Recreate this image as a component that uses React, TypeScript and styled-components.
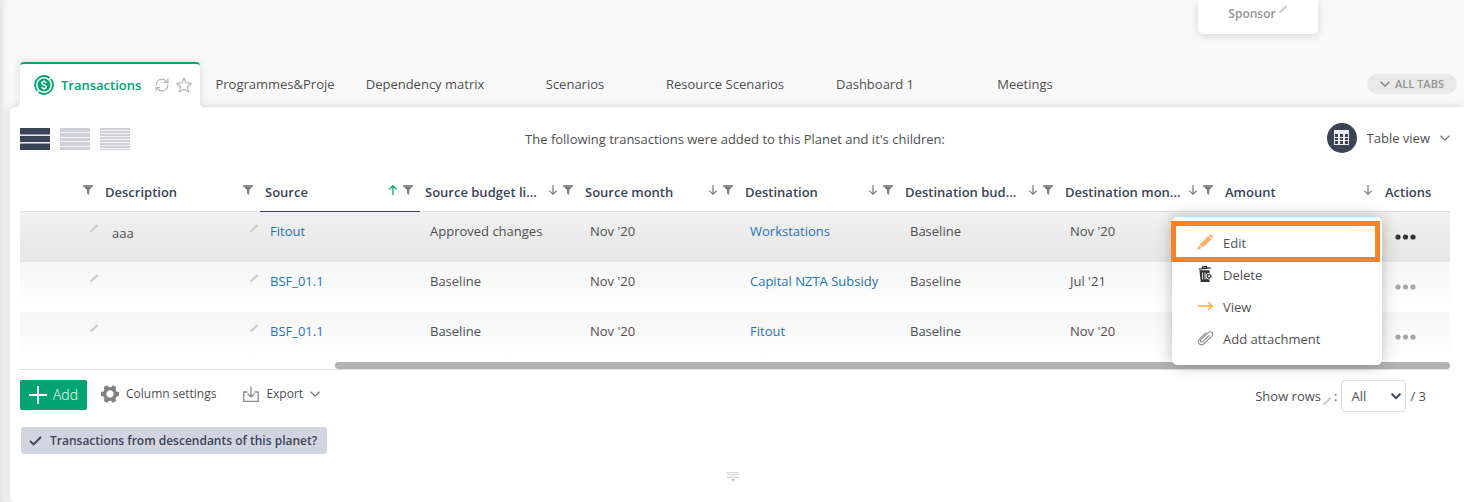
import React from "react";
import styled, { createGlobalStyle, css } from "styled-components";

const GlobalStyle = createGlobalStyle`
  *, *::before, *::after { box-sizing: border-box; }
  body {
    margin: 0;
    background: #f9f9f9;
    color: #4f4f4f;
    font-family: "Open Sans", "Noto Sans", sans-serif;
    font-size: 13px;
    line-height: 18px;
  }
  button, select, input { font: inherit; color: inherit; margin: 0; }
  button { border: 0; padding: 0; background: none; cursor: pointer; }
  a { color: #1f74b8; text-decoration: none; }
  svg { display: block; flex: none; }
`;

const Page = styled.div`
  display: flex;
  flex-direction: column;
  min-height: 100vh;
  overflow: hidden;
  box-shadow: inset 8px 0 8px -6px rgba(0, 0, 0, 0.12);
`;

const TopArea = styled.div`
  display: flex;
  justify-content: flex-end;
  align-items: flex-start;
  height: 62px;
  padding-right: 146px;
`;

const SponsorCard = styled.div`
  display: flex;
  justify-content: center;
  gap: 3px;
  width: 120px;
  height: 34px;
  padding-top: 5px;
  border-radius: 0 0 5px 5px;
  background: #fff;
  box-shadow: 0 2px 8px rgba(0, 0, 0, 0.14);
  color: #939393;
  font-size: 12px;
  font-weight: 600;
`;

const TabBar = styled.nav`
  position: relative;
  z-index: 1;
  display: flex;
  height: 45px;
  padding: 0 7px 0 20px;
`;

const ActiveTab = styled.div`
  position: relative;
  display: flex;
  align-items: center;
  width: 180px;
  padding: 0 8px 2px 14px;
  border-top: 2px solid #00a470;
  border-radius: 4px 4px 0 0;
  background: #fff;
  box-shadow: 0 0 10px rgba(0, 0, 0, 0.12);
  clip-path: inset(-10px -10px 0 -10px);

  &::before,
  &::after {
    content: "";
    position: absolute;
    bottom: 0;
    width: 4px;
    height: 4px;
  }
  &::before {
    right: 100%;
    background: radial-gradient(circle at 0 0, transparent 4px, #fff 4px);
  }
  &::after {
    left: 100%;
    background: radial-gradient(circle at 100% 0, transparent 4px, #fff 4px);
  }
`;

const ActiveTabName = styled.button`
  display: flex;
  align-items: center;
  flex: 1;
  gap: 7px;
  color: #00a470;
  font-weight: 600;
`;

const IconButton = styled.button`
  margin-left: 7px;
  color: #b5b5b5;
`;

const Tab = styled.button`
  width: 150px;
  padding: 0 14px 2px;
  white-space: nowrap;
`;

const AllTabs = styled.button`
  display: flex;
  align-items: center;
  justify-content: center;
  gap: 5px;
  width: 90px;
  height: 20px;
  margin: 12px 0 0 auto;
  border-radius: 10px;
  background: #e9e9e9;
  color: #939393;
  font-size: 11px;
  font-weight: 600;
`;

const Panel = styled.main`
  flex: 1;
  margin-left: 10px;
  padding: 0 14px 20px 10px;
  border-radius: 5px 0 0 5px;
  background: #fff;
  box-shadow: 0 0 10px rgba(0, 0, 0, 0.15);
`;

const Toolbar = styled.div`
  display: grid;
  grid-template-columns: 1fr auto 1fr;
  align-items: center;
  height: 64px;
`;

const DensityGroup = styled.div`
  display: flex;
  gap: 10px;
`;

const DensityButton = styled.button<{ $active?: boolean }>`
  color: ${(p) => (p.$active ? "#3b4457" : "#cfd1d7")};
`;

const ViewPicker = styled.button`
  display: flex;
  align-items: center;
  justify-self: end;
  gap: 10px;
  padding-bottom: 3px;
`;

const ViewBadge = styled.span`
  display: grid;
  place-items: center;
  width: 30px;
  height: 30px;
  border-radius: 50%;
  background: #3b4457;
`;

const TableFrame = styled.div`
  border-bottom: 1px solid #ddd;
`;

const Table = styled.table`
  width: 100%;
  table-layout: fixed;
  border-collapse: separate;
  border-spacing: 0;
`;

const Col = styled.col<{ $width?: number }>`
  width: ${(p) => (p.$width ? `${p.$width}px` : "auto")};
`;

const HeadCell = styled.th<{ $sorted?: boolean }>`
  height: 41px;
  padding: 2px 7px 0 5px;
  border-bottom: 1px solid ${(p) => (p.$sorted ? "#3b4457" : "#ddd")};
  color: #3b4457;
  font-weight: 600;
  text-align: left;
`;

const HeadContent = styled.div`
  display: flex;
  align-items: center;
  gap: 5px;
`;

const HeadLabel = styled.span`
  flex: 1;
  min-width: 0;
  white-space: nowrap;
`;

const HeadButton = styled.button<{ $on?: boolean }>`
  height: 14px;
  color: ${(p) => (p.$on ? "#00a470" : "#808080")};

  svg {
    margin-bottom: 4px;
  }
`;

const Row = styled.tr<{ $active?: boolean }>`
  background: ${(p) =>
    p.$active
      ? "linear-gradient(#f1f1f1, #e5e5e5)"
      : "linear-gradient(#f6f6f6, #fff)"};
`;

const Cell = styled.td`
  height: 50px;
  padding: 10px 0 0 10px;
  vertical-align: top;
  white-space: nowrap;
`;

const EditableCell = styled(Cell)`
  padding: 12px 1px 0 12px;
`;

const Editable = styled.div`
  display: flex;
  justify-content: space-between;
`;

const PencilButton = styled.button`
  height: 8px;
  margin-left: auto;
`;

const ActionCell = styled(Cell)`
  position: relative;
  padding: 0 0 1px 15px;
  vertical-align: middle;
`;

const DotsButton = styled.button<{ $active?: boolean }>`
  display: block;
  color: ${(p) => (p.$active ? "#333" : "#a6a6a6")};
`;

const Menu = styled.div`
  position: absolute;
  z-index: 2;
  top: 5px;
  right: 68px;
  width: 210px;
  padding: 10px 0;
  border-radius: 5px;
  background: #fff;
  box-shadow: 0 0 16px rgba(0, 0, 0, 0.25);
`;

const MenuItem = styled.button<{ $marked?: boolean }>`
  position: relative;
  display: flex;
  align-items: center;
  gap: 9px;
  width: 100%;
  height: 32px;
  padding-left: 25px;

  svg {
    margin-bottom: 2px;
  }

  ${(p) =>
    p.$marked &&
    css`
      &::after {
        content: "";
        position: absolute;
        inset: -6px 2px -3px -1px;
        border: 5px solid #ff8126;
      }
    `}
`;

const ScrollTrack = styled.div`
  height: 7px;
`;

const ScrollThumb = styled.div`
  width: 78%;
  height: 7px;
  margin-left: auto;
  border-radius: 4px;
  background: #b3b3b3;
`;

const Footer = styled.div`
  display: flex;
  align-items: flex-start;
  padding: 10px 24px 0 0;
`;

const AddButton = styled.button`
  display: flex;
  align-items: center;
  justify-content: center;
  gap: 6px;
  width: 67px;
  height: 30px;
  border-radius: 2px;
  background: #00a470;
  color: #fff;
  font-size: 14px;
  font-weight: 300;
`;

const FooterButton = styled.button<{ $gap: number }>`
  display: flex;
  align-items: center;
  gap: 7px;
  height: 28px;
  margin-left: ${(p) => p.$gap}px;
  font-size: 12px;
`;

const RowsPicker = styled.div`
  display: flex;
  align-items: center;
  gap: 4px;
  margin-left: auto;
`;

const RowsLabel = styled.label`
  display: flex;
  align-items: center;
  gap: 2px;
`;

const LowPencil = styled.span`
  padding-top: 10px;
`;

const SelectBox = styled.div`
  position: relative;

  svg {
    position: absolute;
    top: 13px;
    right: 5px;
    pointer-events: none;
  }
`;

const RowsSelect = styled.select`
  appearance: none;
  display: block;
  width: 65px;
  height: 32px;
  padding: 0 20px 0 9px;
  border: 1px solid #ddd;
  border-radius: 4px;
  background: #fff;
`;

const FilterChip = styled.label`
  display: inline-flex;
  align-items: center;
  gap: 8px;
  height: 27px;
  margin: 15px 0 0 1px;
  padding: 0 10px 0 8px;
  border-radius: 3px;
  background: #d1d5e0;
  color: #3b4457;
  font-size: 12px;
  font-weight: 600;
  cursor: pointer;
`;

const ChipCheck = styled.span`
  display: grid;

  & > * {
    grid-area: 1 / 1;
  }
  input {
    appearance: none;
    width: 13px;
    height: 10px;
  }
  svg {
    pointer-events: none;
  }
`;

const ResizeHandle = styled.div`
  display: flex;
  justify-content: center;
  padding: 18px 4px 0 0;
`;

const Pencil = () => (
  <svg width="9" height="8" viewBox="0 0 9 8" fill="none">
    <path d="M2 6.2 7 1.6" stroke="#cbcbcb" strokeWidth="2.2" strokeLinecap="round" />
    <path d="M.2 7.8.8 5.8 2.3 7.2z" fill="#bbb" />
  </svg>
);

const Chevron = ({ size = 10, color = "#777", weight = 1.3 }) => (
  <svg width={size} height={6} viewBox="0 0 10 6" fill="none" stroke={color} strokeWidth={weight}>
    <path d="M.6.7 5 5.1 9.4.7" />
  </svg>
);

const Coin = () => (
  <svg width="20" height="20" viewBox="-10 -10 20 20" fill="none">
    <circle r="6.5" fill="#00a470" />
    <circle
      r="9"
      stroke="#00a470"
      strokeWidth="1.8"
      strokeDasharray="26.5 1.77"
      transform="rotate(-42)"
    />
    <path
      d="M2.3-1.9c-.2-.9-1-1.4-2.2-1.4-1.3 0-2.3.6-2.3 1.6C-2.2.7 2.4-.6 2.4 1.8c0 1-1 1.6-2.4 1.6-1.2 0-2.2-.6-2.4-1.5M0-4.8v1.5M0 3.3v1.5"
      stroke="#fff"
      strokeWidth="1.5"
    />
  </svg>
);

const Refresh = () => (
  <svg width="14" height="14" viewBox="0 0 14 14" fill="none" stroke="currentColor" strokeWidth="1.2">
    <path d="M1.2 7.6A5.8 5.8 0 0 1 11.8 3.8M12.8 6.4A5.8 5.8 0 0 1 2.2 10.2" />
    <path d="M13 .4v4H9M1 13.6v-4h4" />
  </svg>
);

const Star = () => (
  <svg width="16" height="16" viewBox="0 0 16 16" fill="none" stroke="currentColor" strokeWidth="1.2">
    <path d="m8 1.1 2 4.7 5.2.5-3.9 3.4 1.2 5L8 12.1l-4.5 2.6 1.2-5L.8 6.3 6 5.8z" />
  </svg>
);

const DensityIcon = ({ lines }: { lines: number[] }) => (
  <svg width="30" height="22" viewBox="0 0 30 22">
    <rect width="30" height="22" fill="currentColor" />
    {lines.map((y) => (
      <rect key={y} y={y} width="30" height="1" fill="#f4f4f6" />
    ))}
  </svg>
);

const ComfortableIcon = () => (
  <svg width="30" height="22" viewBox="0 0 30 22">
    <path d="M0 0h30v22H0z" fill="currentColor" />
    <path d="M0 6h30v1H0zM0 15h30v1H0z" fill="#9a9fa9" />
    <path d="M0 7h30v1H0zM0 14h30v1H0z" fill="#e6e7ea" />
  </svg>
);

const GridIcon = () => (
  <svg width="15" height="15" viewBox="0 0 15 15" fill="#fff">
    <path d="M0 0h15v15H0z" opacity=".9" />
    <path
      fill="#3b4457"
      d="M1 4h3v3H1zM6 4h3v3H6zM11 4h3v3h-3zM1 8h3v2H1zM6 8h3v2H6zM11 8h3v2h-3zM1 11h3v3H1zM6 11h3v3H6zM11 11h3v3h-3z"
    />
  </svg>
);

const Funnel = () => (
  <svg width="10" height="10" viewBox="0 0 10 10" fill="#7d7d7d">
    <path d="M0 0h10v2H0z" opacity=".85" />
    <path d="M1 2h8L6.2 5.2V10L4 8.2v-3z" />
  </svg>
);

const SortArrow = ({ up }: { up?: boolean }) => (
  <svg width="10" height="10" viewBox="0 0 10 10" fill="none" stroke="currentColor" strokeWidth="1.3">
    <path d={up ? "M5 10V.8M1.2 4.4 5 .8l3.8 3.6" : "M5 0v9.2M1.2 5.6 5 9.2l3.8-3.6"} />
  </svg>
);

const Dots = () => (
  <svg width="21" height="6" viewBox="0 0 21 6" fill="currentColor">
    <circle cx="3" cy="3" r="2.6" />
    <circle cx="10.5" cy="3" r="2.6" />
    <circle cx="18" cy="3" r="2.6" />
  </svg>
);

const EditIcon = () => (
  <svg width="17" height="16" viewBox="0 0 17 16" fill="#f9ac62">
    <path d="m11.4 2.1 3.1 3.1-8.8 8.4-3.1-3.1z" />
    <path d="m12.1 1.4.7-.8q.6-.5 1.2 0l2 2q.5.6 0 1.2l-.8.8zM2 11.2l2.9 2.8-4.5 1.7z" />
    <path d="m4 11.6 8.8-8.4" stroke="#fbcd9e" strokeWidth=".6" />
  </svg>
);

const TrashIcon = () => (
  <svg width="17" height="16" viewBox="0 0 17 16" fill="none">
    <path d="M1.8 3.2 13.8 1.8M5.6 2.5V1l4-.5v1.5" stroke="#333" strokeWidth="1.3" />
    <path d="M2.4 4.3h10.2V16H3.8z" fill="#333" />
    <path d="M5.6 6.5v7M8 6.5v7" stroke="#e4e4e4" strokeWidth="1" />
    <circle cx="12" cy="10.2" r="3.2" fill="#fff" />
    <circle cx="12" cy="10.2" r="1.9" stroke="#333" strokeWidth="1.3" strokeDasharray="1.4 .6" />
    <circle cx="12" cy="10.2" r="1.6" stroke="#333" strokeWidth="1" />
  </svg>
);

const ArrowIcon = () => (
  <svg width="17" height="10" viewBox="0 0 17 10" fill="none" stroke="#f6b02c" strokeWidth="1.5">
    <path d="M1 5h14M11.4 1.2 15.2 5l-3.8 3.8" />
  </svg>
);

const ClipIcon = () => (
  <svg width="17" height="16" viewBox="0 0 17 16" fill="none" stroke="#8f8f8f" strokeWidth="1.1">
    <path d="m12.2 5.4-6.4 6.1c-1.6 1.4-3.3-.3-1.9-1.8l7.3-7c2.8-2.4 6 .7 3.6 3.4l-7.6 7.4c-3.8 3.3-8.1-.8-4.6-4.6l6.6-6.2" />
  </svg>
);

const PlusIcon = () => (
  <svg width="18" height="18" viewBox="0 0 18 18" stroke="#fff" strokeWidth="2">
    <path d="M9 0v18M0 9h18" />
  </svg>
);

const Gear = () => (
  <svg width="18" height="18" viewBox="-9 -9 18 18">
    <circle r="5.4" fill="none" stroke="#808080" strokeWidth="3.4" />
    {[30, 90, 150, 210, 270, 330].map((a) => (
      <rect key={a} x="-2.3" y="-9" width="4.6" height="3.4" rx="1" fill="#808080" transform={`rotate(${a})`} />
    ))}
  </svg>
);

const ExportIcon = () => (
  <svg width="16" height="16" viewBox="0 0 16 16" fill="none" stroke="#8c8c8c" strokeWidth="1.3">
    <path d="M4.5 6H.7v9.3h14.6V6h-3.8M8 .5v10.3M4.6 7.8 8 11l3.4-3.2" />
  </svg>
);

const Check = () => (
  <svg width="13" height="10" viewBox="0 0 13 10" fill="none" stroke="#3b4457" strokeWidth="1.9">
    <path d="M1 4.8 4.6 8.4 12 1" />
  </svg>
);

const HandleIcon = () => (
  <svg width="12" height="9" viewBox="0 0 12 9" fill="#d4d4d4">
    <path d="M0 0h12v1H0zM0 2h12v1H0zM0 5h12v1H0z" />
    <path d="M0 4h12v1H0z" opacity=".4" />
    <path d="M4 7h4v1H7v1H5V8H4z" fill="#c4c4c4" />
  </svg>
);

const tabs = [
  "Programmes&Proje",
  "Dependency matrix",
  "Scenarios",
  "Resource Scenarios",
  "Dashboard 1",
  "Meetings",
];

const densities = [
  { name: "Comfortable rows", icon: <ComfortableIcon /> },
  { name: "Medium rows", icon: <DensityIcon lines={[4, 9, 13, 18]} /> },
  { name: "Compact rows", icon: <DensityIcon lines={[2, 5, 8, 11, 14, 17, 20]} /> },
];

const columns = [
  { label: "", filter: true },
  { label: "Description", filter: true },
  { label: "Source", sort: "up", filter: true },
  { label: "Source budget li...", sort: "down", filter: true },
  { label: "Source month", sort: "down", filter: true },
  { label: "Destination", sort: "down", filter: true },
  { label: "Destination bud...", sort: "down", filter: true },
  { label: "Destination mon...", sort: "down", filter: true },
  { label: "Amount", sort: "down" },
  { label: "Actions" },
];

const rows = [
  ["aaa", "Fitout", "Approved changes", "Nov '20", "Workstations", "Baseline", "Nov '20"],
  ["", "BSF_01.1", "Baseline", "Nov '20", "Capital NZTA Subsidy", "Baseline", "Jul '21"],
  ["", "BSF_01.1", "Baseline", "Nov '20", "Fitout", "Baseline", "Nov '20"],
];

const menuItems = [
  { label: "Edit", icon: <EditIcon />, marked: true },
  { label: "Delete", icon: <TrashIcon /> },
  { label: "View", icon: <ArrowIcon /> },
  { label: "Add attachment", icon: <ClipIcon /> },
];

const ActionsMenu = () => (
  <Menu role="menu">
    {menuItems.map((item) => (
      <MenuItem key={item.label} role="menuitem" $marked={item.marked}>
        {item.icon}
        {item.label}
      </MenuItem>
    ))}
  </Menu>
);

const TransactionsTable = () => (
  <TableFrame>
    <Table>
      <colgroup>
        {columns.map((c, i) => (
          <Col key={i} $width={i === 0 ? undefined : i === 9 ? 70 : 160} />
        ))}
      </colgroup>
      <thead>
        <tr>
          {columns.map((c, i) => (
            <HeadCell key={i} $sorted={c.sort === "up"}>
              <HeadContent>
                <HeadLabel>{c.label}</HeadLabel>
                {c.sort && (
                  <HeadButton $on={c.sort === "up"} aria-label={`Sort by ${c.label}`}>
                    <SortArrow up={c.sort === "up"} />
                  </HeadButton>
                )}
                {c.filter && (
                  <HeadButton aria-label={`Filter ${c.label}`}>
                    <Funnel />
                  </HeadButton>
                )}
              </HeadContent>
            </HeadCell>
          ))}
        </tr>
      </thead>
      <tbody>
        {rows.map(([description, source, line, month, target, targetLine, targetMonth], i) => (
          <Row key={i} $active={i === 0}>
            <EditableCell>
              <Editable>
                <PencilButton aria-label="Edit name">
                  <Pencil />
                </PencilButton>
              </Editable>
            </EditableCell>
            <EditableCell>
              <Editable>
                {description}
                <PencilButton aria-label="Edit description">
                  <Pencil />
                </PencilButton>
              </Editable>
            </EditableCell>
            <Cell>
              <a href="#source">{source}</a>
            </Cell>
            <Cell>{line}</Cell>
            <Cell>{month}</Cell>
            <Cell>
              <a href="#destination">{target}</a>
            </Cell>
            <Cell>{targetLine}</Cell>
            <Cell>{targetMonth}</Cell>
            <Cell />
            <ActionCell>
              <DotsButton $active={i === 0} aria-label="Row actions">
                <Dots />
              </DotsButton>
              {i === 0 && <ActionsMenu />}
            </ActionCell>
          </Row>
        ))}
      </tbody>
    </Table>
    <ScrollTrack>
      <ScrollThumb />
    </ScrollTrack>
  </TableFrame>
);

export default function App() {
  return (
    <Page>
      <GlobalStyle />
      <TopArea>
        <SponsorCard>
          Sponsor <Pencil />
        </SponsorCard>
      </TopArea>
      <TabBar>
        <ActiveTab>
          <ActiveTabName>
            <Coin />
            Transactions
          </ActiveTabName>
          <IconButton aria-label="Refresh">
            <Refresh />
          </IconButton>
          <IconButton aria-label="Favourite">
            <Star />
          </IconButton>
        </ActiveTab>
        {tabs.map((name) => (
          <Tab key={name}>{name}</Tab>
        ))}
        <AllTabs>
          <Chevron /> ALL TABS
        </AllTabs>
      </TabBar>
      <Panel>
        <Toolbar>
          <DensityGroup>
            {densities.map((d, i) => (
              <DensityButton key={d.name} $active={i === 0} aria-label={d.name}>
                {d.icon}
              </DensityButton>
            ))}
          </DensityGroup>
          <span>The following transactions were added to this Planet and it's children:</span>
          <ViewPicker>
            <ViewBadge>
              <GridIcon />
            </ViewBadge>
            Table view
            <Chevron />
          </ViewPicker>
        </Toolbar>
        <TransactionsTable />
        <Footer>
          <AddButton>
            <PlusIcon />
            Add
          </AddButton>
          <FooterButton $gap={14}>
            <Gear />
            Column settings
          </FooterButton>
          <FooterButton $gap={27}>
            <ExportIcon />
            Export
            <Chevron />
          </FooterButton>
          <RowsPicker>
            <RowsLabel htmlFor="rows">
              Show rows
              <LowPencil>
                <Pencil />
              </LowPencil>
              :
            </RowsLabel>
            <SelectBox>
              <RowsSelect id="rows" defaultValue="All">
                <option>All</option>
                <option>10</option>
              </RowsSelect>
              <Chevron color="#3b4457" weight={2} />
            </SelectBox>
            / 3
          </RowsPicker>
        </Footer>
        <FilterChip>
          <ChipCheck>
            <input type="checkbox" defaultChecked />
            <Check />
          </ChipCheck>
          Transactions from descendants of this planet?
        </FilterChip>
        <ResizeHandle>
          <HandleIcon />
        </ResizeHandle>
      </Panel>
    </Page>
  );
}
